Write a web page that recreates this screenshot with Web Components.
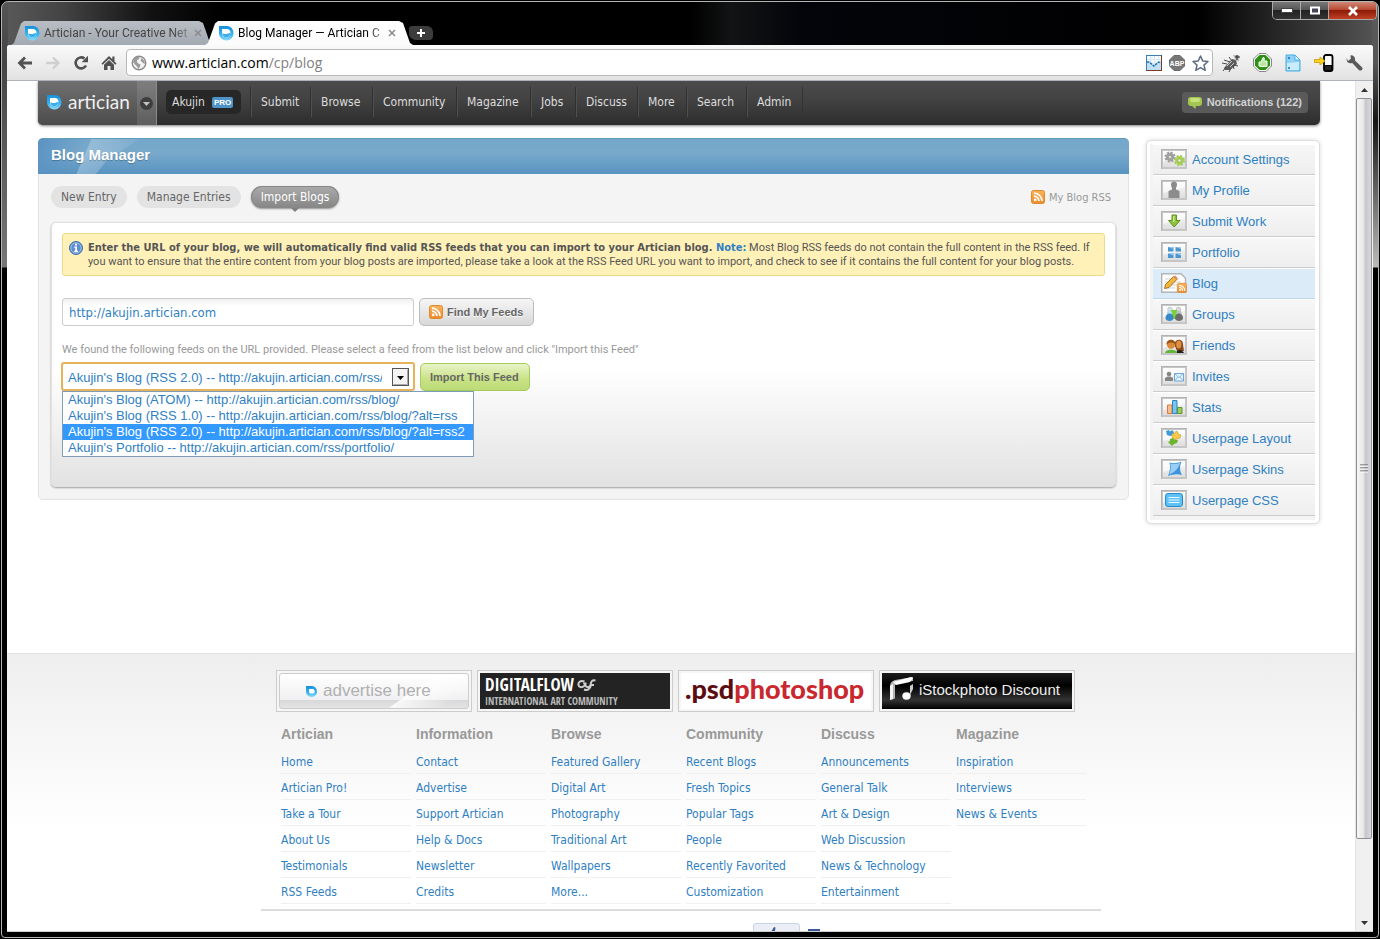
<!DOCTYPE html>
<html lang="en">
<head>
<meta charset="utf-8">
<title>Blog Manager — Artician CP</title>
<style>
  html, body { margin: 0; height: 100%; background: #000; }
  body { font-family: "DejaVu Sans Condensed", "DejaVu Sans", sans-serif; font-size: 12px; color: #555; overflow: hidden; }
</style>
</head>
<body>
<browser-window>
  <browser-tab slot="tabs" label="Artician - Your Creative Net"></browser-tab>
  <browser-tab slot="tabs" label="Blog Manager — Artician C" active></browser-tab>
  <browser-toolbar slot="toolbar"></browser-toolbar>
  <site-page></site-page>
</browser-window>

<script>
/* ---------- icon drawings, keyed by name: [width, height, markup] ---------- */
const frame = '<rect x="0" y="0" width="26" height="20" fill="#c6c6c6"/><rect x="2" y="2" width="22" height="16" fill="url(#g)"/><path d="M2 2h22v5L2 13z" fill="#fff" opacity=".6"/><path d="M0 .5h26M.5 0v20" stroke="#b4b4b4" fill="none"/>';
const fdef = '<defs><linearGradient id="g" x1="0" y1="0" x2="0" y2="1"><stop offset="0" stop-color="#fafafa"/><stop offset="1" stop-color="#dedede"/></linearGradient></defs>';
const boxed = s => [26, 20, fdef + frame + s];
const gear = (x, y, c, d) => `<g transform="translate(${x} ${y})"><circle r="4.600" fill="none" stroke="${c}" stroke-width="2" stroke-dasharray="2.100 1.510"/><circle r="2.900" fill="none" stroke="${c}" stroke-width="2.600"/><circle r="1.500" fill="#f2f2f2" stroke="${d}" stroke-width=".6"/></g>`;
const rssArt = '<rect x=".5" y=".5" width="13" height="13" rx="2" fill="url(#r)" stroke="#e08a2c"/><circle cx="4.2" cy="9.9" r="1.4" fill="#fff"/><path d="M3 6.2a4.9 4.9 0 0 1 4.9 4.9M3 3.2a8 8 0 0 1 8 7.9" stroke="#fff" stroke-width="1.7" fill="none"/>';
const rdef = '<defs><linearGradient id="r" x1="0" y1="0" x2="0" y2="1"><stop offset="0" stop-color="#fbb45c"/><stop offset="1" stop-color="#f08a2a"/></linearGradient></defs>';
const leafDef = '<defs><linearGradient id="l" x1="0" y1="0" x2="0" y2="1"><stop offset="0" stop-color="#1590dc"/><stop offset=".6" stop-color="#3db4f0"/><stop offset="1" stop-color="#8fdcfa"/></linearGradient></defs>';
const ICONS = {
  leaf: [16, 16, leafDef + '<path d="M1 1h8A6.500 6.800 0 0 1 15.500 8 7.200 7.200 0 0 1 1 8.500z" fill="url(#l)"/><path d="M4 4h5.200c3 .5 3.900 3.200 3 5.200C11.200 11.500 9.600 12.300 8 12.300 6 12.300 4.300 11 4 9z" fill="#fff"/><path d="M4.200 8.300c2.500 1.500 4.500.6 8.200-.5-.2 3-2.300 4.500-4.400 4.500-2 0-3.600-1.800-3.800-4z" fill="#3aaeea"/>'],
  drop: [13, 13, leafDef + '<path d="M1 1h6a5.500 5.500 0 0 1 5 5.500A5.500 5.500 0 0 1 1 6.500z" fill="url(#l)"/><path d="M4 4h4a2.500 2.500 0 0 1 .5 4.500C6.500 8.800 4.500 8.500 4 7z" fill="#fff"/>'],
  back: [16, 14, '<path d="M8 1.500L2.500 7 8 12.500M3 7h12" fill="none" stroke="#515151" stroke-width="2.800"/>'],
  forward: [16, 14, '<path d="M8 1.500L13.500 7 8 12.500M13 7H1" fill="none" stroke="#cfcfcf" stroke-width="2.400"/>'],
  reload: [16, 16, '<path d="M13 10.500a5.500 5.500 0 1 1-1.500-7" fill="none" stroke="#515151" stroke-width="2.600"/><path d="M15 .8v6.400H8.600z" fill="#515151"/>'],
  home: [16, 16, '<path d="M8 1L.5 8.500l1.200 1.200L8 3.700l6.300 6 1.200-1.200-2-2V1.500h-2.200v2.800z" fill="#515151"/><path d="M3 9.700l5-4.700 5 4.700V15H9.500v-4h-3v4H3z" fill="#515151"/>'],
  globe: [16, 16, '<circle cx="8" cy="8" r="6.800" fill="#f4f4f4" stroke="#8c8c8c" stroke-width="1.400"/><path d="M3 4.500c2-2.500 4-3 5.500-2.500L8 4 5.800 5.600 6.500 8 9.500 9.500 8.800 12 7.500 14 6 11.500 3.500 9 2 7zM10.500 3l3 3 .5 3-2-1-2.500-2.500z" fill="#9b9b9b"/>'],
  chart: [16, 16, '<rect x=".5" y=".5" width="15" height="15" fill="#f4fafe" stroke="#3b7fb4"/><path d="M4.500 1v14M8.500 1v14M12.500 1v14M1 4.500h14M1 8.500h14" stroke="#d4e8f6"/><path d="M1 7l2 0 5 4 4-3 3-1v8H1z" fill="#bfe0f6"/><path d="M1 7h2l5 4 4-3.500 3-.5" fill="none" stroke="#1f6fae" stroke-width="1.400" stroke-dasharray="2.500 .8"/><path d="M0 15.500h16M15.500 0v16" stroke="#7a3a20"/>'],
  abp: [16, 16, '<path d="M5 .5h6L15.500 5v6L11 15.500H5L.5 11V5z" fill="#767676" stroke="#6a6a6a"/><text x="8" y="10.500" font-size="7" font-weight="700" text-anchor="middle" fill="#fff" font-family="Liberation Sans">ABP</text>'],
  star: [17, 16, '<path d="M8.500 1l2.200 4.900 5.300.6-4 3.600 1.200 5.200-4.700-2.700-4.700 2.700L5 10.100l-4-3.600 5.300-.6z" fill="#fff" stroke="#5d6b80" stroke-width="1.500" stroke-linejoin="round"/>'],
  bug: [20, 18, '<path d="M3 14l8-9 4 1 1 4-7 6-5 0z" fill="#5c5c5c"/><path d="M1 9l5 1M3 6l6 2M8 3l3 4M2 17l3-4M8 18l2-4M13 15l-1-4M17 12l-4-1M14 5l4-4" stroke="#494949" fill="none"/><path d="M12 1h6v6h-3z" fill="#bcbcbc"/><path d="M16 1v5M14 3h5" stroke="#222" fill="none"/><path d="M6 12l5-5M9 13l4-4" stroke="#c8c8c8" fill="none"/>'],
  thumb: [19, 19, '<path d="M6 .5h7l5.500 5.500v7L13 18.500H6L.5 13V6z" fill="#fff" stroke="#888"/><path d="M6.500 2h6L17 6.500v6L12.500 17h-6L2 12.500v-6z" fill="#2e9015"/><path d="M6 9h2l2-4.500 1.300.5-.3 3h3v5.500H8L6 13z" fill="#b9e8a0" stroke="#fff"/>'],
  docs: [16, 18, '<path d="M1 1h9l5 5v11H1z" fill="#8fd0f5" stroke="#4aaee6"/><path d="M2 9l12-1v8H2z" fill="#c9edfd"/><path d="M10 1v5h5z" fill="#e9f8ff" stroke="#4aaee6"/><circle cx="4" cy="4" r="1" fill="#1c6aa8"/><circle cx="4" cy="14" r="1" fill="#1c6aa8"/>'],
  phone: [20, 18, '<rect x="10" y="1" width="8.500" height="16" rx="2" fill="#fff" stroke="#000" stroke-width="1.800"/><path d="M10 11h8.500v5.500H10z" fill="#000"/><path d="M11.500 13h6M11.500 15h6" stroke="#888" stroke-dasharray="1 1"/><path d="M.5 5.500H6V3l5 4-5 4V8.500H.500z" fill="#ffd21c" stroke="#c79a00" stroke-width=".8"/>'],
  wrench: [18, 18, '<path d="M4.500 1.200l.3 3.600L2 7 .8 4.200C-.2 8 3 10.200 6.200 9l6.600 7c2 1.800 5-.8 3.200-2.800L9 6.600C9.500 3 7.500.900 4.500 1.200z" fill="#5b5b5b"/>'],
  caret: [13, 13, '<circle cx="6.500" cy="6.500" r="6.500" fill="#3e3e3e"/><path d="M3 5h7L6.500 9z" fill="#c4c4c4"/>'],
  bubble: [14, 12, '<rect x="0" y="0" width="14" height="9" rx="3" fill="#a3c653"/><path d="M3 8h5L7.500 12z" fill="#a3c653"/><rect x="2" y="1" width="10" height="4" rx="2" fill="#c6e07e"/>'],
  info: [14, 14, '<circle cx="7" cy="7" r="6.500" fill="#5e8fd0" stroke="#3e6cae"/><circle cx="7" cy="7" r="5.200" fill="none" stroke="#b4cdee" stroke-width=".8"/><path d="M6 2.800h2v1.700H6zM5.300 5.600H8v4.200h1v1.200H5.200V9.800H6.200V6.800h-.9z" fill="#fff"/>'],
  rss: [14, 14, rdef + rssArt],
  down: [17, 18, '<rect x=".5" y=".5" width="16" height="17" fill="#f4f4f4" stroke="#555"/><path d="M1.500 16.500h14v-15" fill="none" stroke="#aaa"/><path d="M5 8h7l-3.500 4z" fill="#000"/>'],
  settings: boxed(gear(9, 8, '#a0a0a0', '#777') + gear(18.5, 11.5, '#a6cd55', '#86ad35')),
  profile: boxed('<path d="M10 4.500a3 3 0 0 1 6 0c0 1.500-.5 2.500-1 3.300V9.500l3.500 1.500V18h-11v-7L11 9.500V7.800c-.5-.8-1-1.800-1-3.300z" fill="#8c8c8c"/>'),
  submit: boxed('<path d="M11 4h4.500v5.500h3.500L13.200 16 7.500 9.500H11z" fill="#8fc23c" stroke="#5f8f25"/><path d="M12 5h1.500v6H12z" fill="#c8e88c"/>'),
  portfolio: boxed('<path d="M7 5h5.500v4.500H7zM14.500 5H20v4.500h-5.500zM7 11.500h5.500V16H7zM14.500 11.500H20V16h-5.500z" fill="#4b96cf"/><path d="M7 5h5.500v2zM14.500 5H20v2zM7 11.500h5.500v2zM14.500 11.500H20v2z" fill="#9acbf0"/>'),
  blog: [26, 20, fdef + rdef + '<path d="M.7.7H20l4.500 4.500v14H.7z" fill="#fdfdfd" stroke="#b4b4b4" stroke-width="1.400"/><path d="M4 6h14M4 9h16M4 12h12M4 15h10" stroke="#d3d3d3"/><path d="M4.500 11.500L12.500 3.500l3.300 3L8 14.500l-4.500 1z" fill="#f0b73c" stroke="#a36a17" stroke-width=".9"/><path d="M12.500 3.500l3.300 3 1-1.500-2.500-2.500z" fill="#e6907c"/><g transform="translate(16 10) scale(.71)">' + rssArt + '</g>'],
  groups: boxed('<circle cx="9" cy="5.500" r="2.300" fill="#d8e2ea" stroke="#a5b1ba" stroke-width=".6"/><circle cx="17.500" cy="5.500" r="2.300" fill="#ddd" stroke="#aaa" stroke-width=".6"/><path d="M10 6h6l2 9H9z" fill="#78d03c"/><circle cx="8.500" cy="9" r="2.600" fill="#b5dcf2"/><path d="M4.500 14c0-6 8-6 8 0 0 4-8 4-8 0z" fill="#3a88c8"/><circle cx="18" cy="9" r="2.600" fill="#c0c0c0"/><path d="M14 14c0-6 8-6 8 0 0 4-8 4-8 0z" fill="#6c6c6c"/>'),
  friends: boxed('<path d="M13.500 10c0-7 9-7 8.500 0l1 6h-7z" fill="#8a4a18"/><ellipse cx="17.800" cy="9.500" rx="2.600" ry="4" fill="#e08f42"/><path d="M15 18c1-4 6-4 8 0z" fill="#222"/><circle cx="10" cy="9.500" r="4.200" fill="#d98a3a"/><path d="M5.500 9.500c-.5-6.500 9.500-6.500 9 0C13 7 8 6.500 5.500 9.500z" fill="#9a5416"/><path d="M4 18c0-4.500 12-4.500 12 0z" fill="#63b63a"/>'),
  invites: boxed('<circle cx="8" cy="8" r="2.300" fill="#868686"/><path d="M4 15v-3l2.500-1.500h3L12 12v3z" fill="#868686"/><path d="M13.500 7.500h9v7.500h-9z" fill="#e8f4fd" stroke="#6fa8da"/><path d="M13.500 7.500l4.500 4 4.500-4M13.500 15l3.500-4M22.500 15L19 11" fill="none" stroke="#6fa8da" stroke-width=".8"/>'),
  stats: boxed('<path d="M6.500 8h4.500v8.500H6.500z" fill="#f7bd90" stroke="#dc7a3c"/><path d="M11.500 3.500h4.500v13h-4.500z" fill="#7cc4ee" stroke="#2c86c0"/><path d="M16.500 10.500H21v6h-4.500z" fill="#9ccc5c" stroke="#5f9430"/>'),
  layout: boxed('<path d="M5 3l3-1 1 1.500L11 2l2 2-1 3-3 1-3-1z" fill="#3f9ada"/><path d="M11 6l3-1 1-2 2 1 0 2 3 1-1 3-3 1-3 1-2-3z" fill="#f4c94c" stroke="#c39a2a" stroke-width=".6"/><path d="M9 11l3-1 2 2 3 0-1 3-3 1-2 2-2-2-2-2 2-1z" fill="#6cb52e"/>'),
  skins: boxed('<path d="M8.500 3.500c4 1.200 8 .6 12-1-2 5-2 9 .5 13.500-5-1.500-9-.5-14 1C9 13 9.500 8 8.500 3.500z" fill="#3e94dc"/><path d="M9.200 4.500c3.800 1 6.800.6 10-.7-2 6-5 9-11 12C9.800 12 10 8.500 9.200 4.500z" fill="#9acdf4"/>'),
  css: boxed('<rect x="4.500" y="3.500" width="17" height="13" rx="2.500" fill="#5ec2f4" stroke="#2a88cc"/><path d="M7.500 7.500h11M7.500 10h11M7.500 12.500h11" stroke="#e8f8ff" fill="none"/>'),
  flow: [20, 14, '<path d="M7.500 3.500C3 2 1 4.500 1.500 7s3.500 2.800 5.500 1c1.500-1.500 1-3-.8-3M8.500 4.500v3c1 2.500 4 2 5-.5C14 3.500 15 1.800 18.500 2.500M7 11.500c4 1.500 6-.5 7-4.500h3" fill="none" stroke="#cfcfcf" stroke-width="2"/>'],
  notes: [28, 26, '<path d="M2 24V10c0-3 2-5 5-6L25 1v4C17 5.500 11 7 7 9v13.500z" fill="#b4b4b4"/><path d="M5 6L23 1l2 1-3 4-14 3z" fill="#fff"/><path d="M2 24V10l3-2v15z" fill="#f4f4f4"/><ellipse cx="18.500" cy="20" rx="4.200" ry="3.700" fill="#fff"/><path d="M22 19v-9l3-2v5z" fill="#ccc"/>'],
  like: [14, 14, '<path d="M1 6h3v7H1zM5 6l3-5 1.500.5L9 5h4v7l-1 1H5z" fill="#3b5998"/>'],
  fb: [12, 12, '<rect width="12" height="12" fill="#3b5998"/>'],
};

/* ---------- base class: renders its template into an open shadow root ---------- */
class Base extends HTMLElement {
  connectedCallback() {
    if (this.shadowRoot) return;
    const t = document.createElement('template');
    t.innerHTML = '<style>*{box-sizing:border-box}' + this.css() + '</style>' + this.html();
    this.attachShadow({ mode: 'open' }).append(t.content.cloneNode(true));
  }
  css() { return ''; }
  html() { return '<slot></slot>'; }
  a(n) { return this.getAttribute(n) || ''; }
}
const define = (name, css, html) => customElements.define(name, class extends Base {
  css() { return css; }
  html() { return typeof html === 'function' ? html(this) : html; }
});
const icon = (n, cls = '') => `<ui-icon name="${n}" class="${cls}"></ui-icon>`;

define('ui-icon', ':host{display:inline-block;flex:none;line-height:0}', el => {
  const [w, h, s] = ICONS[el.a('name')];
  return `<svg width="${w}" height="${h}" viewBox="0 0 ${w} ${h}" aria-hidden="true">${s}</svg>`;
});

/* ---------- browser chrome ---------- */
define('browser-window', `
  :host{display:block;height:100vh;padding:1px;background:#000;box-sizing:border-box}
  .win{height:100%;display:flex;flex-direction:column;border:1px solid #b4b4b4;border-radius:7px 7px 4px 4px;overflow:hidden;
    background:
      linear-gradient(#555,#444 60px,#777 265px,#000 266px) left top/6px 266px no-repeat,
      linear-gradient(#5c5c5c,#555 60px,#161616 120px,#bbb 265px,#000 266px) right top/6px 266px no-repeat,
      linear-gradient(90deg,#5a5a5a,#444 60px,#111 150px,#000 220px,#000 50%,#121314 53%,#04050a 58%,#000 87%,#222 92%,#555) top/100% 45px no-repeat, #000}
  .top{display:flex;height:43px;flex:none;align-items:flex-start;justify-content:space-between;padding:0 1px 0 9px}
  .tabs{display:flex;align-self:flex-end;align-items:flex-end}
  .new{width:24px;height:14px;margin:0 0 5px 4px;border:0;padding:0;background:#3c3c3c;border-radius:3px 6px 4px 7px;display:grid;place-items:center}
  .ctl{display:flex;border:1px solid #aaa;border-top:0;border-radius:0 0 5px 5px;overflow:hidden}
  .ctl button{width:28px;height:17px;border:0;border-right:1px solid #aaa;padding:0;background:linear-gradient(#777,#555 48%,#222 50%,#333);display:grid;place-items:center}
  .ctl .x{width:47px;border-right:0;background:linear-gradient(#d08878,#b8452c 48%,#8c1c08 50%,#c04024)}
  .body{flex:1;min-height:0;display:flex;flex-direction:column;margin:0 5px 5px;background:#fff;border-bottom:1px solid #ccc;border-radius:3px 3px 0 0;overflow:hidden}
  .view{flex:1;min-height:0;display:flex}
  .page{flex:1;min-width:0;overflow:hidden}
`, `<div class="win">
  <div class="top"><div class="tabs"><slot name="tabs"></slot><button class="new" aria-label="New tab"><svg width="8" height="8"><path d="M4 0v8M0 4h8" stroke="#fff" stroke-width="2"/></svg></button></div>
  <div class="ctl"><button aria-label="Minimize"><svg width="12" height="5"><rect x=".5" y=".5" width="11" height="4" fill="#fff" stroke="#444"/></svg></button><button aria-label="Maximize"><svg width="12" height="9"><rect x="2" y="1.500" width="8" height="6" fill="#445" stroke="#fff" stroke-width="2"/></svg></button><button class="x" aria-label="Close"><svg width="12" height="10"><path d="M2 1l8 8M10 1L2 9" stroke="#fff" stroke-width="2.600"/></svg></button></div></div>
  <div class="body"><slot name="toolbar"></slot><div class="view"><div class="page"><slot></slot></div><scroll-bar></scroll-bar></div></div></div>`);

define('browser-tab', `
  :host{display:block;width:202px;height:24px;margin-right:-8px;position:relative}
  :host([active]){width:208px;margin-right:-8px;z-index:1}
  .t{height:100%;display:flex;align-items:center;gap:4px;padding:0 11px 0 13px;font:12px/24px Roboto,sans-serif;color:#444;
    background:linear-gradient(#b9bec5,#a3a9b1);clip-path:polygon(0 100%,3px 92%,10px 10%,13px 0,calc(100% - 14px) 0,calc(100% - 10px) 8%,calc(100% - 3px) 92%,100% 100%)}
  :host([active]) .t{background:linear-gradient(#fff,#fbfbfb);color:#000;padding-right:17px}
  span{flex:1;white-space:nowrap;mask-image:linear-gradient(90deg,#000 88%,rgba(0,0,0,.3))}
  button{border:0;background:none;padding:0;width:8px;height:24px;display:grid;place-items:center}
`, el => `<div class="t">${icon('leaf')}<span>${el.a('label')}</span><button aria-label="Close tab"><svg width="8" height="8"><path d="M1 1l6 6M7 1L1 7" stroke="#8a8a8a" stroke-width="1.500"/></svg></button></div>`);

define('browser-toolbar', `
  :host{display:flex;flex:none;align-items:center;height:36px;box-sizing:border-box;border-bottom:1px solid #aeb2b9;background:linear-gradient(#fafafa,#e2e2e2);padding:0 4px}
  button{border:0;background:none;padding:0;width:28px;height:28px;display:grid;place-items:center}
  .nav{display:flex;margin-right:3px}
  .ext{display:flex;gap:3px;margin-left:4px}
  .box{flex:1;display:flex;align-items:center;height:27px;border:1px solid #b8b8b8;border-radius:4px;background:#fff;padding:0 3px 0 4px;gap:5px}
  .url{flex:1;font:14px/24px "Open Sans",sans-serif;color:#000}
  .url b{font-weight:400;color:#808080}
  .box button{width:18px}
`, `<div class="nav"><button aria-label="Back">${icon('back')}</button><button aria-label="Forward">${icon('forward')}</button><button aria-label="Reload">${icon('reload')}</button><button aria-label="Home">${icon('home')}</button></div>
  <div class="box">${icon('globe')}<div class="url" role="textbox" aria-label="Address" contenteditable="plaintext-only" spellcheck="false">www.artician.com<b>/cp/blog</b></div>
  <button aria-label="Analytics">${icon('chart')}</button><button aria-label="Adblock">${icon('abp')}</button><button aria-label="Bookmark">${icon('star')}</button></div>
  <div class="ext"><button aria-label="Bug">${icon('bug')}</button><button aria-label="Thumbs up">${icon('thumb')}</button><button aria-label="Docs">${icon('docs')}</button><button aria-label="Send to phone">${icon('phone')}</button><button aria-label="Settings">${icon('wrench')}</button></div>`);

define('scroll-bar', `
  :host{display:flex;flex-direction:column;width:18px;flex:none;background:#f0f0f0;box-sizing:border-box;border-left:1px solid #e4e4e4;padding-right:1px}
  button{border:0;padding:0;background:none;height:17px;display:grid;place-items:center}
  .thumb{flex:744;border:1px solid #8f8f95;border-radius:2px;background:linear-gradient(90deg,#f6f6f6,#e8e8ea 45%,#c8c8cc 60%,#d8d8dc);display:grid;place-items:center}
  .rest{flex:75}
`, `<button aria-label="Scroll up"><svg width="7" height="4"><path d="M0 4h7L3.500 0z" fill="#333"/></svg></button><div class="thumb"><svg width="8" height="9"><path d="M0 1h8M0 4h8M0 7h8" stroke="#555"/><path d="M0 2h8M0 5h8M0 8h8" stroke="#fff"/></svg></div><div class="rest"></div><button aria-label="Scroll down"><svg width="7" height="4"><path d="M0 0h7L3.500 4z" fill="#333"/></svg></button>`);

/* ---------- site ---------- */
define('site-page', `
  :host{display:block;background:#fff}
  .wrap{padding:0 35px 0 31px}
  .cols{display:flex;gap:17px;align-items:flex-start;padding-top:13px;min-height:528px;box-sizing:border-box}
  main{flex:1;min-width:0}
`, `<div class="wrap"><site-header></site-header>
  <div class="cols"><main><blog-panel></blog-panel></main>
  <side-menu>
    <side-item icon="settings">Account Settings</side-item><side-item icon="profile">My Profile</side-item><side-item icon="submit">Submit Work</side-item>
    <side-item icon="portfolio">Portfolio</side-item><side-item icon="blog" current>Blog</side-item><side-item icon="groups">Groups</side-item>
    <side-item icon="friends">Friends</side-item><side-item icon="invites">Invites</side-item><side-item icon="stats">Stats</side-item>
    <side-item icon="layout">Userpage Layout</side-item><side-item icon="skins">Userpage Skins</side-item><side-item icon="css">Userpage CSS</side-item>
  </side-menu></div></div><site-footer></site-footer>`);

define('site-header', `
  :host{display:flex;height:44px;background:linear-gradient(#4b4b4b,#434343 40%,#2d2d2d);border-radius:0 0 5px 5px;box-shadow:0 1px 3px rgba(0,0,0,.5);align-items:center;box-sizing:border-box;padding-bottom:2px}
  a{color:#ddd;text-decoration:none}
  .logo{display:flex;align-items:center;height:44px;margin-bottom:-2px;background:linear-gradient(#707070,#4c4c4c);border-right:1px solid #8a8a8a;border-bottom-left-radius:5px}
  .logo a{display:flex;align-items:center;gap:6px;width:99px;padding:0 0 2px 8px;height:44px;font:19px/20px Lato,sans-serif;color:#f0f0f0}
  .logo button{width:19px;align-self:stretch;border:0;padding:0;background:rgba(255,255,255,.1);display:grid;place-items:center}
  .user{display:flex;align-items:center;gap:7px;width:75px;height:24px;margin:0 9px;padding-left:6px;border-radius:5px;background:#272727;box-sizing:border-box}
  .user b{font:bold 8px/11px "Liberation Sans",sans-serif;color:#fff;background:#4f94c8;border-radius:2px;padding:0 2px;width:21px;text-align:center}
  nav{display:grid;grid-template-columns:60px 62px 84px 74px 45px 62px 49px 60px 56px;border-right:1px solid #333}
  nav a{border-left:1px solid #303030;box-shadow:inset 1px 0 #505050;line-height:30px;padding-left:10px;white-space:nowrap}
  .note{display:flex;align-items:center;gap:5px;margin:0 12px 0 auto;padding:0 6px;height:21px;border-radius:4px;background:#5a5a5a;font:bold 11px/21px "Liberation Sans",sans-serif;color:#d2d2d2}
  .note ui-icon{padding-top:2px}
`, `<div class="logo"><a href="#">${icon('leaf')}artician</a><button aria-label="Site menu">${icon('caret')}</button></div>
  <a class="user" href="#">Akujin <b>PRO</b></a>
  <nav>${['Submit','Browse','Community','Magazine','Jobs','Discuss','More','Search','Admin'].map(t => `<a href="#">${t}</a>`).join('')}</nav>
  <a class="note" href="#">${icon('bubble')}Notifications (122)</a>`);

define('blog-panel', `
  :host{display:block;border:1px solid #e3e3e3;border-radius:5px;background:#f4f4f4}
  h1{position:relative;margin:-1px -1px 0;height:36px;padding:0 13px;font:bold 15px/32px "Liberation Sans",sans-serif;color:#fff;border-radius:5px 5px 0 0;overflow:hidden;
    background:linear-gradient(112deg,#5a92c2 0,rgba(90,146,194,0) 46px) ,linear-gradient(#74a7ca,#78a9cb 40%,#5893c1);border-top:1px solid #5f9bbb;
    text-shadow:0 1px 1px rgba(0,0,0,.25)}
  h1::before{content:"";position:absolute;left:38px;top:0;width:64px;height:36px;background:linear-gradient(90deg,rgba(255,255,255,.28),rgba(255,255,255,.06));clip-path:polygon(24% 0,100% 0,50% 55%,30% 100%,0 100%)}
  h1 span{position:relative}
  .bar{display:flex;align-items:center;padding:12px 17px 0 12px;gap:10px}
  .bar a{text-decoration:none}
  .pill{position:relative;height:22px;line-height:22px;padding:0 10px;border-radius:11px;background:#e3e3e3;color:#666}
  .pill.on{background:linear-gradient(#ababab,#868686);color:#fff;box-shadow:inset 0 0 0 1px #888,0 1px 2px rgba(0,0,0,.4)}
  .pill.on::after{content:"";position:absolute;left:50%;bottom:-4px;margin-left:-4px;border:4px solid transparent;border-top-color:#808080;border-bottom:0}
  .rss{display:flex;align-items:center;gap:4px;margin-left:auto;color:#999;font-size:11px}
  .box{margin:14px 12px 12px;padding:10px;min-height:265px;border:1px solid #e0e0e0;border-radius:5px;background:linear-gradient(#fff 55%,#e2e2e2);box-shadow:0 1px 2px rgba(0,0,0,.35)}
`, `<h1><span>Blog Manager</span></h1>
  <div class="bar"><a class="pill" href="#">New Entry</a><a class="pill" href="#">Manage Entries</a><a class="pill on" href="#">Import Blogs</a><a class="rss" href="#">${icon('rss')}My Blog RSS</a></div>
  <div class="box"><info-note></info-note><feed-form></feed-form></div>`);

define('info-note', `
  :host{display:flex;gap:5px;padding:7px 10px 6px 6px;border:1px solid #eed98a;border-radius:3px;background:#fff1b8;font:11px/14px Roboto,sans-serif;color:#555}
  p{margin:0}
  b{font-family:"DejaVu Sans Condensed","DejaVu Sans",sans-serif;line-height:1}
  b a{color:#2f80c3;text-decoration:none}
`, `${icon('info')}<p><b>Enter the URL of your blog, we will automatically find valid RSS feeds that you can import to your Artician blog. <a href="#">Note:</a></b> Most Blog RSS feeds do not contain the full content in the RSS feed. If you want to ensure that the entire content from your blog posts are imported, please take a look at the RSS Feed URL you want to import, and check to see if it contains the full content for your blog posts.</p>`);

define('feed-form', `
  :host{display:block;margin-top:22px}
  .row{display:flex;align-items:center;gap:5px}
  input{width:352px;height:28px;margin:0;padding:0 6px;border:1px solid #ccc;border-radius:3px;background:linear-gradient(#f0f0f0,#fff 7px);font:13px "DejaVu Sans Condensed","DejaVu Sans",sans-serif;color:#2f80c3;outline:0}
  button{display:flex;align-items:center;gap:4px;height:28px;padding:0 10px 0 9px;border:1px solid #bdbdbd;border-radius:5px;background:linear-gradient(#f6f6f6,#d8d8d8);font:bold 11px "Liberation Sans",sans-serif;color:#666;text-shadow:0 1px #fff;white-space:nowrap}
  button.go{border-color:#a4cc5a;background:linear-gradient(#e8f4c8,#c8e284 60%,#bcdb78);text-shadow:none}
  label{display:block;margin:17px 0 5px;font:11px/14px Roboto,sans-serif;color:#999}
  .pick{position:relative;margin-left:-1px}
  select{appearance:none;display:block;width:354px;height:29px;margin:0;padding:1px 31px 0 5px;border:2px solid #e6b25a;border-radius:3px;background:#fff;font:13px "Liberation Sans",sans-serif;color:#2f80c3;outline:0;overflow:hidden;text-overflow:clip}
  .pick ui-icon{position:absolute;right:6px;top:6px;pointer-events:none}
  ul{position:absolute;left:1px;top:29px;z-index:2;margin:0;padding:0;list-style:none;border:1px solid #7f9db9;background:#fff;font:13px/16px "Liberation Sans",sans-serif;color:#2f80c3;white-space:nowrap}
  li{padding:0 8px 0 5px}
  li[aria-selected=true]{background:#3399ff;color:#fff}
`, () => {
  const o = ["Akujin's Blog (ATOM) -- http://akujin.artician.com/rss/blog/", "Akujin's Blog (RSS 1.0) -- http://akujin.artician.com/rss/blog/?alt=rss", "Akujin's Blog (RSS 2.0) -- http://akujin.artician.com/rss/blog/?alt=rss2", "Akujin's Portfolio -- http://akujin.artician.com/rss/portfolio/"];
  return `<div class="row"><input type="text" aria-label="Blog URL" value="http://akujin.artician.com"><button type="button">${icon('rss')}Find My Feeds</button></div>
  <label for="feed">We found the following feeds on the URL provided. Please select a feed from the list below and click "Import this Feed"</label>
  <div class="row"><div class="pick"><select id="feed">${o.map((t, i) => `<option${i === 2 ? ' selected' : ''}>${t}</option>`).join('')}</select>${icon('down')}
  <ul role="listbox" aria-label="Feeds">${o.map((t, i) => `<li role="option" aria-selected="${i === 2}">${t}</li>`).join('')}</ul></div><button class="go" type="button">Import This Feed</button></div>`;
});

define('side-menu', `
  :host{display:block;flex:none;width:174px;margin-top:2px;padding:3px 4px 3px 3px;box-sizing:border-box;border:1px solid #ddd;border-radius:5px;background:#fff;box-shadow:0 0 4px rgba(0,0,0,.15)}
  nav{padding:0 0 4px 3px;background:#f3f3f3}
`, `<nav><slot></slot></nav>`);

define('side-item', `
  :host{display:block}
  a{display:flex;align-items:center;gap:5px;height:31px;padding:0 0 2px 8px;border-top:1px solid #fff;border-bottom:1px solid #ccc;background:linear-gradient(#f7f7f7,#eee);font:13px "Liberation Sans",sans-serif;color:#2f80c3;text-decoration:none}
  span{padding-top:2px}
  :host([current]) a{background:#dcebf8;border-bottom-color:#b8d8f2}
`, el => `<a href="#">${icon(el.a('icon'))}<span><slot></slot></span></a>`);

define('site-footer', `
  :host{display:block;border-top:1px solid #e3e3e3;background:linear-gradient(#eee,#fff 180px);padding-top:16px}
  .in{width:840px;max-width:100%;margin:0 auto}
  .ads{display:flex;gap:5px;padding-left:15px}
  .cols{display:grid;grid-template-columns:repeat(6,130px);gap:5px;padding:12px 0 5px 20px;border-bottom:2px solid #ddd}
  .social{display:flex;gap:8px;padding:12px 0 0 492px}
  .social button{width:47px;height:22px;margin:0;padding:2px 12px;border:1px solid #cad4e7;border-radius:3px;background:#eceef5;text-align:left}
  .social a{padding-top:6px}
`, `<div class="in"><div class="ads"><ad-banner kind="adv"></ad-banner><ad-banner kind="flow"></ad-banner><ad-banner kind="psd"></ad-banner><ad-banner kind="stock"></ad-banner></div>
  <div class="cols">
   <link-column label="Artician" links="Home|Artician Pro!|Take a Tour|About Us|Testimonials|RSS Feeds"></link-column>
   <link-column label="Information" links="Contact|Advertise|Support Artician|Help &amp; Docs|Newsletter|Credits"></link-column>
   <link-column label="Browse" links="Featured Gallery|Digital Art|Photography|Traditional Art|Wallpapers|More..."></link-column>
   <link-column label="Community" links="Recent Blogs|Fresh Topics|Popular Tags|People|Recently Favorited|Customization"></link-column>
   <link-column label="Discuss" links="Announcements|General Talk|Art &amp; Design|Web Discussion|News &amp; Technology|Entertainment"></link-column>
   <link-column label="Magazine" links="Inspiration|Interviews|News &amp; Events"></link-column>
  </div>
  <div class="social"><button type="button" aria-label="Like">${icon('like')}</button><a href="#" aria-label="Facebook">${icon('fb')}</a></div></div>`);

define('link-column', `
  :host{display:block}
  h2{margin:0;font:bold 14px/20px "Liberation Sans",sans-serif;color:#999;padding-bottom:4px}
  ul{margin:0;padding:0;list-style:none}
  li{height:26px;line-height:28px;border-bottom:1px solid #f0f0f0;white-space:nowrap}
  a{color:#2f80c3;text-decoration:none}
`, el => `<h2>${el.a('label')}</h2><ul>${el.a('links').split('|').map(t => `<li><a href="#">${t.replace('&', '&amp;')}</a></li>`).join('')}</ul>`);

const ADS = {
  adv: `${icon('drop')}advertise here`,
  flow: `<span class="name">DIGITALFLOW</span>${icon('flow')}<span class="sub">INTERNATIONAL ART COMMUNITY</span>`,
  psd: '<span class="dark">.psd</span><span>photoshop</span>',
  stock: `${icon('notes')}iStockphoto Discount`,
};
define('ad-banner', `
  :host{display:block;width:196px;height:42px;box-sizing:border-box;border:1px solid #ccc;background:#f6f6f6;padding:2px}
  a{display:flex;align-items:center;height:100%;text-decoration:none;white-space:nowrap;font-family:"Liberation Sans",sans-serif;overflow:hidden}
  .adv{gap:5px;padding-left:25px;font-size:17px;color:#b0b0b0;border:1px solid #ccc;border-radius:3px;background:linear-gradient(145deg,transparent 66%,rgba(255,255,255,.8) 67%,transparent 90%),linear-gradient(#fff,#f0f0f2 75%,#d8d8d8 78%,#e4e4e4)}
  .flow{display:grid;grid-template:20px 12px/auto 1fr;align-content:center;column-gap:3px;background:#232323;color:#fff;padding-left:5px}
  .name{font:300 17px/20px "Open Sans Condensed","Open Sans Condensed Light",sans-serif}
  .sub{grid-column:1/3;font:300 10px/12px "Open Sans Condensed","Open Sans Condensed Light",sans-serif;color:#bbb}
  .psd{background:#fff;color:#c9292e;padding:0 0 4px 4px;font:900 27px/32px Lato,sans-serif}
  .stock{gap:3px;padding:0 0 4px 6px;background:linear-gradient(#1c1c1c,#000 35%,#333 75%,#000);color:#eee;font-size:15px}
  .dark{color:#5c0d12}
`, el => `<a href="#" class="${el.a('kind')}">${ADS[el.a('kind')]}</a>`);
</script>
</body>
</html>
